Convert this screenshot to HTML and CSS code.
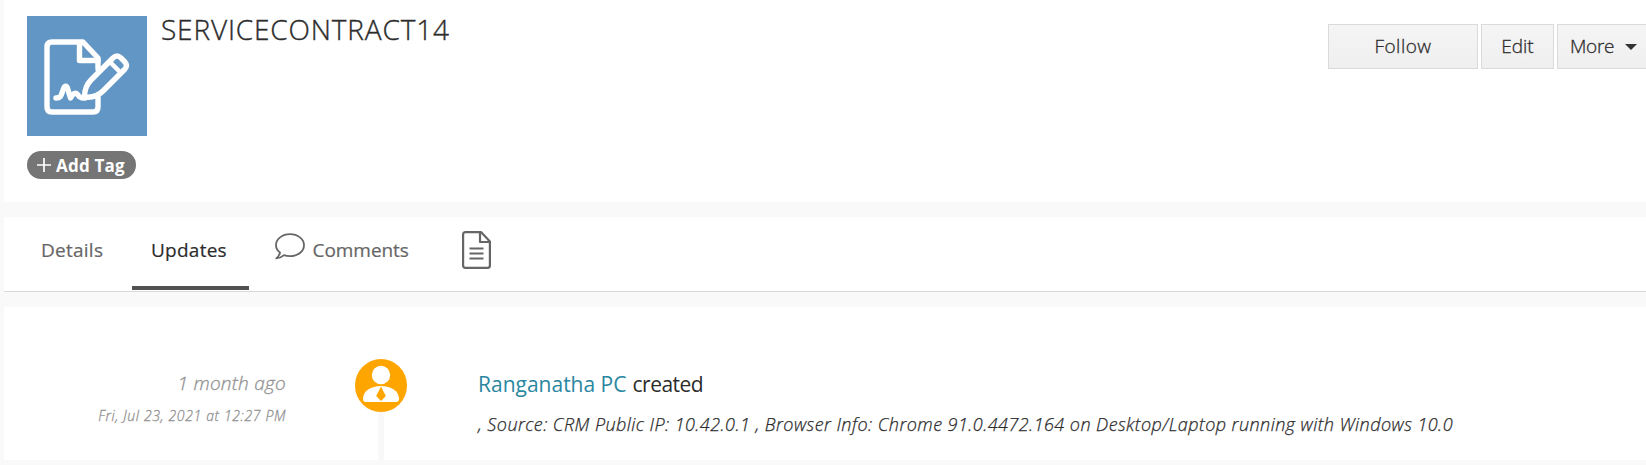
FILE: index.html
```
<!DOCTYPE html>
<html lang="en">
<head>
<meta charset="utf-8">
<title>SERVICECONTRACT14</title>
<link rel="stylesheet" href="styles.css">
</head>
<body>
<header class="record">
  <div class="avatar">
    <svg width="120" height="120" viewBox="0 0 120 120" fill="none" stroke="#fff" stroke-width="5.4" stroke-linejoin="round" stroke-linecap="round">
      <path d="M71 53V42L56 26H25q-5 0-5 5V91q0 5 5 5H66q5 0 5-5V81"/>
      <path d="M52.500 27V44.500H71"/>
      <path d="M57.500 81C57.500 74 59 69 64 64L86 42Q90 38 94 42L97.500 45.500Q101.500 49.500 97.500 53.500L76 75C71 80 65 82 57.500 81Z"/>
      <path d="M83 46L94 57" stroke-width="4.500"/>
      <path d="M29 82C34 82 34 80 36 74C37.500 69 40 69 41 74L43.500 82C46 77 49 76 51 79Q53 82.500 58 82"/>
    </svg>
  </div>
  <h1 class="title">SERVICECONTRACT14</h1>
  <div class="actions">
    <button class="btn follow">Follow</button>
    <button class="btn edit">Edit</button>
    <button class="btn more">More<span class="caret"></span></button>
  </div>
  <button class="tag">
    <svg width="14" height="14" viewBox="0 0 14 14" stroke="#fff" stroke-width="1.700"><path d="M7 0V14M0 7H14"/></svg>
    <span>Add Tag</span>
  </button>
</header>
<nav class="tabs">
  <a class="tab details">Details</a>
  <a class="tab updates active">Updates</a>
  <a class="tab comments">
    <svg class="bubble" width="30" height="28" viewBox="0 0 30 28" fill="none" stroke="#666" stroke-width="1.800" stroke-linejoin="round"><path d="M5 19.500C2.300 17.500 1 15 1 12.200C1 6 7.200 1.200 15 1.200S29 6 29 12.200S22.800 23.200 15 23.200C12.800 23.200 10.800 22.900 9 22.200C6.800 24.200 4.200 25.300 1.300 25.400C3.300 23.700 4.600 22 5 19.500Z"/></svg>
    <span>Comments</span>
  </a>
  <a class="tab document">
    <svg width="29" height="38" viewBox="0 0 29 38" fill="none" stroke="#666" stroke-width="2.200" stroke-linejoin="round"><path d="M3.500 1.100H19L27.900 10.500V34.500Q27.900 36.900 25.500 36.900H3.500Q1.100 36.900 1.100 34.500V3.500Q1.100 1.100 3.500 1.100Z"/><path d="M18 1V11H28M7.500 17.500H21.500M7.500 22.500H21.500M7.500 27.500H21.500"/></svg>
  </a>
</nav>
<main class="timeline">
  <div class="when">
    <div class="ago">1 month ago</div>
    <div class="date">Fri, Jul 23, 2021 at 12:27 PM</div>
  </div>
  <div class="marker">
    <svg width="52" height="53" viewBox="0 0 52 53"><ellipse cx="26" cy="26.500" rx="26" ry="26.500" fill="#ffa500"/><circle cx="26" cy="16" r="9.200" fill="#fff"/><path d="M8 40C8 32 16 27 26 27S44 32 44 40Q44 43 41 43H11Q8 43 8 40Z" fill="#fff"/><path d="M26 27.500L30.800 37L26 42L21.200 37Z" fill="#ffa500"/></svg>
    <div class="line"></div>
  </div>
  <div class="entry">
    <div class="headline"><a class="user">Ranganatha PC</a><span class="verb">created</span></div>
    <div class="info">, Source: CRM Public IP: 10.42.0.1 , Browser Info: Chrome 91.0.4472.164 on Desktop/Laptop running with Windows 10.0</div>
  </div>
</main>
</body>
</html>
```
FILE: styles.css
```
* { box-sizing: border-box; }
body {
  margin: 0;
  padding-left: 4px;
  height: 465px;
  overflow: hidden;
  background: #f9f9f9;
  color: #2c2c2c;
  font-family: "Open Sans", "Liberation Sans", sans-serif;
}
button { font-family: inherit; color: inherit; margin: 0; }
svg { display: block; flex: none; }

.record {
  display: grid;
  grid-template-columns: 120px 1fr auto;
  grid-template-rows: 120px 28px;
  gap: 16px;
  align-items: start;
  height: 202px;
  padding: 16px 0 0 23px;
  row-gap: 15px;
  background: #fff;
}
.avatar { width: 120px; height: 120px; background: #6296c4; }
.title {
  margin: -6px 0 0 -2px;
  font-size: 28px;
  font-weight: 300;
  line-height: 38px;
  letter-spacing: 0.84px;
  -webkit-text-stroke: 0.35px;
}
.actions { display: flex; gap: 3px; margin-top: 8px; }
.btn {
  height: 45px;
  padding: 0 0 2px;
  border: 1px solid #dadada;
  background: linear-gradient(#f5f5f5, #efefef);
  font-size: 19px;
  font-weight: 300;
  -webkit-text-stroke: 0.3px;
}
.follow { width: 150px; letter-spacing: 0.5px; }
.edit { width: 73px; }
.more {
  display: flex;
  align-items: center;
  width: 89px;
  padding-left: 12px;
  border-right: 0;
  letter-spacing: -0.3px;
}
.caret {
  margin: 3px 0 0 11px;
  border: 6px solid transparent;
  border-top-color: #333;
  border-bottom: 0;
}
.tag {
  display: flex;
  align-items: center;
  gap: 5px;
  width: 109px;
  height: 28px;
  padding: 0 0 0 10px;
  border: 0;
  border-radius: 14px;
  background: #757575;
  color: #fff;
  font-size: 17px;
  font-weight: 700;
  letter-spacing: 0.2px;
  white-space: nowrap;
}

.tabs {
  display: flex;
  height: 75px;
  margin-top: 15px;
  padding-left: 37px;
  border-bottom: 1px solid #d9d9d9;
  background: #fff;
}
.tab { color: #666; font-size: 19px; line-height: 66px; -webkit-text-stroke: 0.2px; }
.details { width: 91px; letter-spacing: 0.25px; }
.updates { width: 117px; height: 73px; padding-left: 19px; letter-spacing: 0.25px; }
.active { color: #2c2c2c; border-bottom: 4px solid #515151; }
.comments { display: flex; gap: 8px; width: 186px; margin-left: 26px; letter-spacing: -0.05px; }
.bubble { margin-top: 16px; margin-left: -0.5px; }
.document { margin-left: 1px; padding-top: 14px; line-height: 0; }

.timeline {
  display: flex;
  height: 153px;
  margin-top: 15px;
  background: #fff;
}
.when {
  width: 282px;
  padding-top: 62px;
  text-align: right;
  color: #929292;
  font-style: italic;
  font-weight: 300;
  -webkit-text-stroke: 0.3px;
}
.ago { font-size: 19px; line-height: 28px; letter-spacing: 0.25px; }
.date { margin-top: 9px; font-size: 14px; line-height: 20px; letter-spacing: 0.64px; }
.marker {
  display: flex;
  flex-direction: column;
  align-items: center;
  width: 52px;
  margin-left: 69px;
  padding-top: 52px;
}
.line { width: 6px; flex: 1; background: #f8f8f8; }
.entry { margin-left: 71px; padding-top: 62px; white-space: nowrap; }
.headline { display: flex; gap: 6px; font-size: 21px; line-height: 30px; }
.user { color: #2a87a0; }
.verb { letter-spacing: -0.5px; }
.info {
  margin-top: 12px;
  font-size: 18px;
  font-style: italic;
  font-weight: 300;
  line-height: 26px;
  letter-spacing: 0.445px;
  -webkit-text-stroke: 0.25px;
}
```
